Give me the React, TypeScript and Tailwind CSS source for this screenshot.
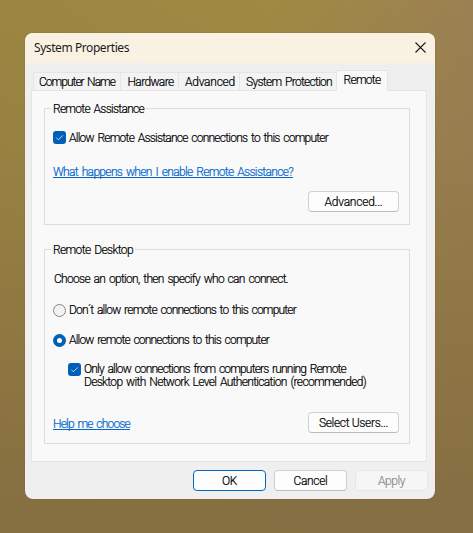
import { useLayoutEffect, useRef, useState } from "react";
import type { ReactNode } from "react";

/** A single line of text whose tracking is set so that it fills `width` pixels. */
function Line({ width, className = "", children }: { width: number; className?: string; children: string }) {
  const ref = useRef<HTMLSpanElement>(null);
  const [tracking, setTracking] = useState(0);
  useLayoutEffect(() => {
    if (ref.current) {
      const natural = ref.current.getBoundingClientRect().width - tracking * children.length;
      setTracking((width - natural) / children.length);
    }
  }, [width, children]);
  return (
    <span ref={ref} className={`inline-block whitespace-pre ${className}`} style={{ letterSpacing: tracking }}>
      {children}
    </span>
  );
}

function CheckBox() {
  return (
    <span className="flex size-[13px] shrink-0 items-center justify-center rounded-[3px] bg-[#005fb8]">
      <svg viewBox="0 0 13 13" className="size-[13px]" fill="none" stroke="#c4daef" strokeWidth="1">
        <path d="M3.3 6.7 5.4 8.8 9.8 4.4" />
      </svg>
    </span>
  );
}

function Radio({ on = false }: { on?: boolean }) {
  return on ? (
    <span className="size-[13px] shrink-0 rounded-full border-4 border-[#005fb8] bg-white" />
  ) : (
    <span className="size-[13px] shrink-0 rounded-full border border-[#868686] bg-[#f3f3f3]" />
  );
}

function Button({ children, className }: { children: ReactNode; className: string }) {
  return (
    <button className={`flex h-[21px] items-center justify-center rounded-[4px] border pt-[2px] leading-[17px] ${className}`}>
      {children}
    </button>
  );
}

const plain = "border-[#d0d0d0] border-b-[#bcbcbc] bg-[#fdfdfd]";

function Group({ title, titleWidth, className, children }: { title: string; titleWidth: number; className: string; children: ReactNode }) {
  return (
    <section className={`flex flex-col border border-[#dcdcdc] ${className}`}>
      <h2 className="-mt-2 ml-[6px] flex h-4 self-start bg-[#f9f9f9] pr-[2px] pl-[2px] leading-4">
        <Line width={titleWidth}>{title}</Line>
      </h2>
      {children}
    </section>
  );
}

function Tab({ label, width, className }: { label: string; width: number; className: string }) {
  return (
    <div className={`mb-px flex h-[18px] justify-center border-t border-r border-[#e5e5e5] bg-[#f3f3f3] pt-px leading-4 ${className}`}>
      <Line width={width}>{label}</Line>
    </div>
  );
}

export default function App() {
  return (
    <main className="h-[533px] w-[473px] overflow-hidden bg-[linear-gradient(100deg,#9b8542_0%,#a08942_48%,#9b7f55_88%,#997e52_100%)] font-['Roboto',sans-serif] text-[12px] font-light text-black [-webkit-text-stroke:0.2px] [word-spacing:1.5px]">
      <div className="h-full bg-[linear-gradient(180deg,transparent_0%,rgba(140,117,64,0.2)_25%,rgba(140,117,64,0.65)_50%,rgba(132,109,65,0.92)_95%)] pt-[33px] pl-[25px]">
        <div className="h-[466px] w-[410px] overflow-hidden rounded-[8px] bg-[#efefef] shadow-[0_0_1px_rgba(60,45,20,0.5)]">
          <header className="flex h-[30px] items-center justify-between bg-[#f9f2e3] pr-[9px] pl-[9px] font-['Noto_Sans',sans-serif] font-normal text-[#1b1b1b] [-webkit-text-stroke:0] [word-spacing:0]">
            <Line width={95}>System Properties</Line>
            <svg viewBox="0 0 11 11" className="-mt-[2px] size-[11px]" fill="none" stroke="#1b1b1b" strokeWidth="1.1">
              <path d="M.5.5 10.5 10.5M10.5.5.5 10.5" />
            </svg>
          </header>

          <nav className="relative flex h-7 items-end pl-2">
            <Tab label="Computer Name" width={76} className="w-[88px] border-l" />
            <Tab label="Hardware" width={46} className="w-[58px] pl-[2px]" />
            <Tab label="Advanced" width={50} className="w-[61px] pl-[2px]" />
            <Tab label="System Protection" width={86} className="w-[96px] border-r-0 pl-[2px]" />
            <div className="flex h-[21px] w-[52px] justify-center rounded-t-[1px] border border-b-0 border-[#e5e5e5] bg-[#f9f9f9] pt-px leading-4">
              <Line width={37}>Remote</Line>
            </div>
          </nav>

          <div className="-mt-px ml-[6px] h-[372px] w-[396px] border border-[#e5e5e5] bg-[#f9f9f9] pt-[17px] pl-3 shadow-[2px_0_0_#f2f2f2]">
            <Group title="Remote Assistance" titleWidth={91} className="h-[117px] w-[366px]">
              <label className="mt-[14px] ml-2 flex h-[13px] items-center gap-[3px] leading-[13px]">
                <CheckBox />
                <Line width={259} className="pt-[2px]">Allow Remote Assistance connections to this computer</Line>
              </label>
              <a className="mt-5 ml-2 flex h-4 self-start leading-4 text-[#0066cc]">
                <Line width={240} className="h-[14px] border-b border-[#0066cc]">What happens when I enable Remote Assistance?</Line>
              </a>
              <Button className={`mt-[11px] ml-[263px] w-[91px] ${plain}`}>
                <Line width={58}>Advanced...</Line>
              </Button>
            </Group>

            <Group title="Remote Desktop" titleWidth={80} className="mt-6 h-[195px] w-[366px]">
              <p className="mt-[13px] ml-[9px] flex h-4 leading-4">
                <Line width={234}>Choose an option, then specify who can connect.</Line>
              </p>
              <label className="mt-[17px] ml-2 flex h-[13px] items-center gap-[3px] leading-[13px]">
                <Radio />
                <Line width={227}>Don´t allow remote connections to this computer</Line>
              </label>
              <label className="mt-[17px] ml-2 flex h-[13px] items-center gap-[3px] leading-[13px]">
                <Radio on />
                <Line width={200}>Allow remote connections to this computer</Line>
              </label>
              <label className="mt-4 ml-[23px] flex items-start gap-[3px]">
                <CheckBox />
                <span className="flex flex-col items-start leading-[13px]">
                  <Line width={262}>Only allow connections from computers running Remote</Line>
                  <Line width={282}>Desktop with Network Level Authentication (recommended)</Line>
                </span>
              </label>
              <div className="mt-[23px] ml-2 flex justify-between pr-[10px]">
                <a className="mt-1 flex h-4 leading-4 text-[#0066cc]">
                  <Line width={77} className="h-[14px] border-b border-[#0066cc]">Help me choose</Line>
                </a>
                <Button className={`w-[91px] ${plain}`}>
                  <Line width={69}>Select Users...</Line>
                </Button>
              </div>
            </Group>
          </div>

          <footer className="mt-2 flex gap-2 pl-[168px]">
            <Button className="w-[73px] border-[#0067c0] bg-[#fdfdfd]">
              <Line width={15}>OK</Line>
            </Button>
            <Button className={`w-[73px] ${plain}`}>
              <Line width={34}>Cancel</Line>
            </Button>
            <Button className="w-[73px] border-[#e7e7e7] bg-[#f6f6f6] text-[#8d8d8d]">
              <Line width={27}>Apply</Line>
            </Button>
          </footer>
        </div>
      </div>
    </main>
  );
}
